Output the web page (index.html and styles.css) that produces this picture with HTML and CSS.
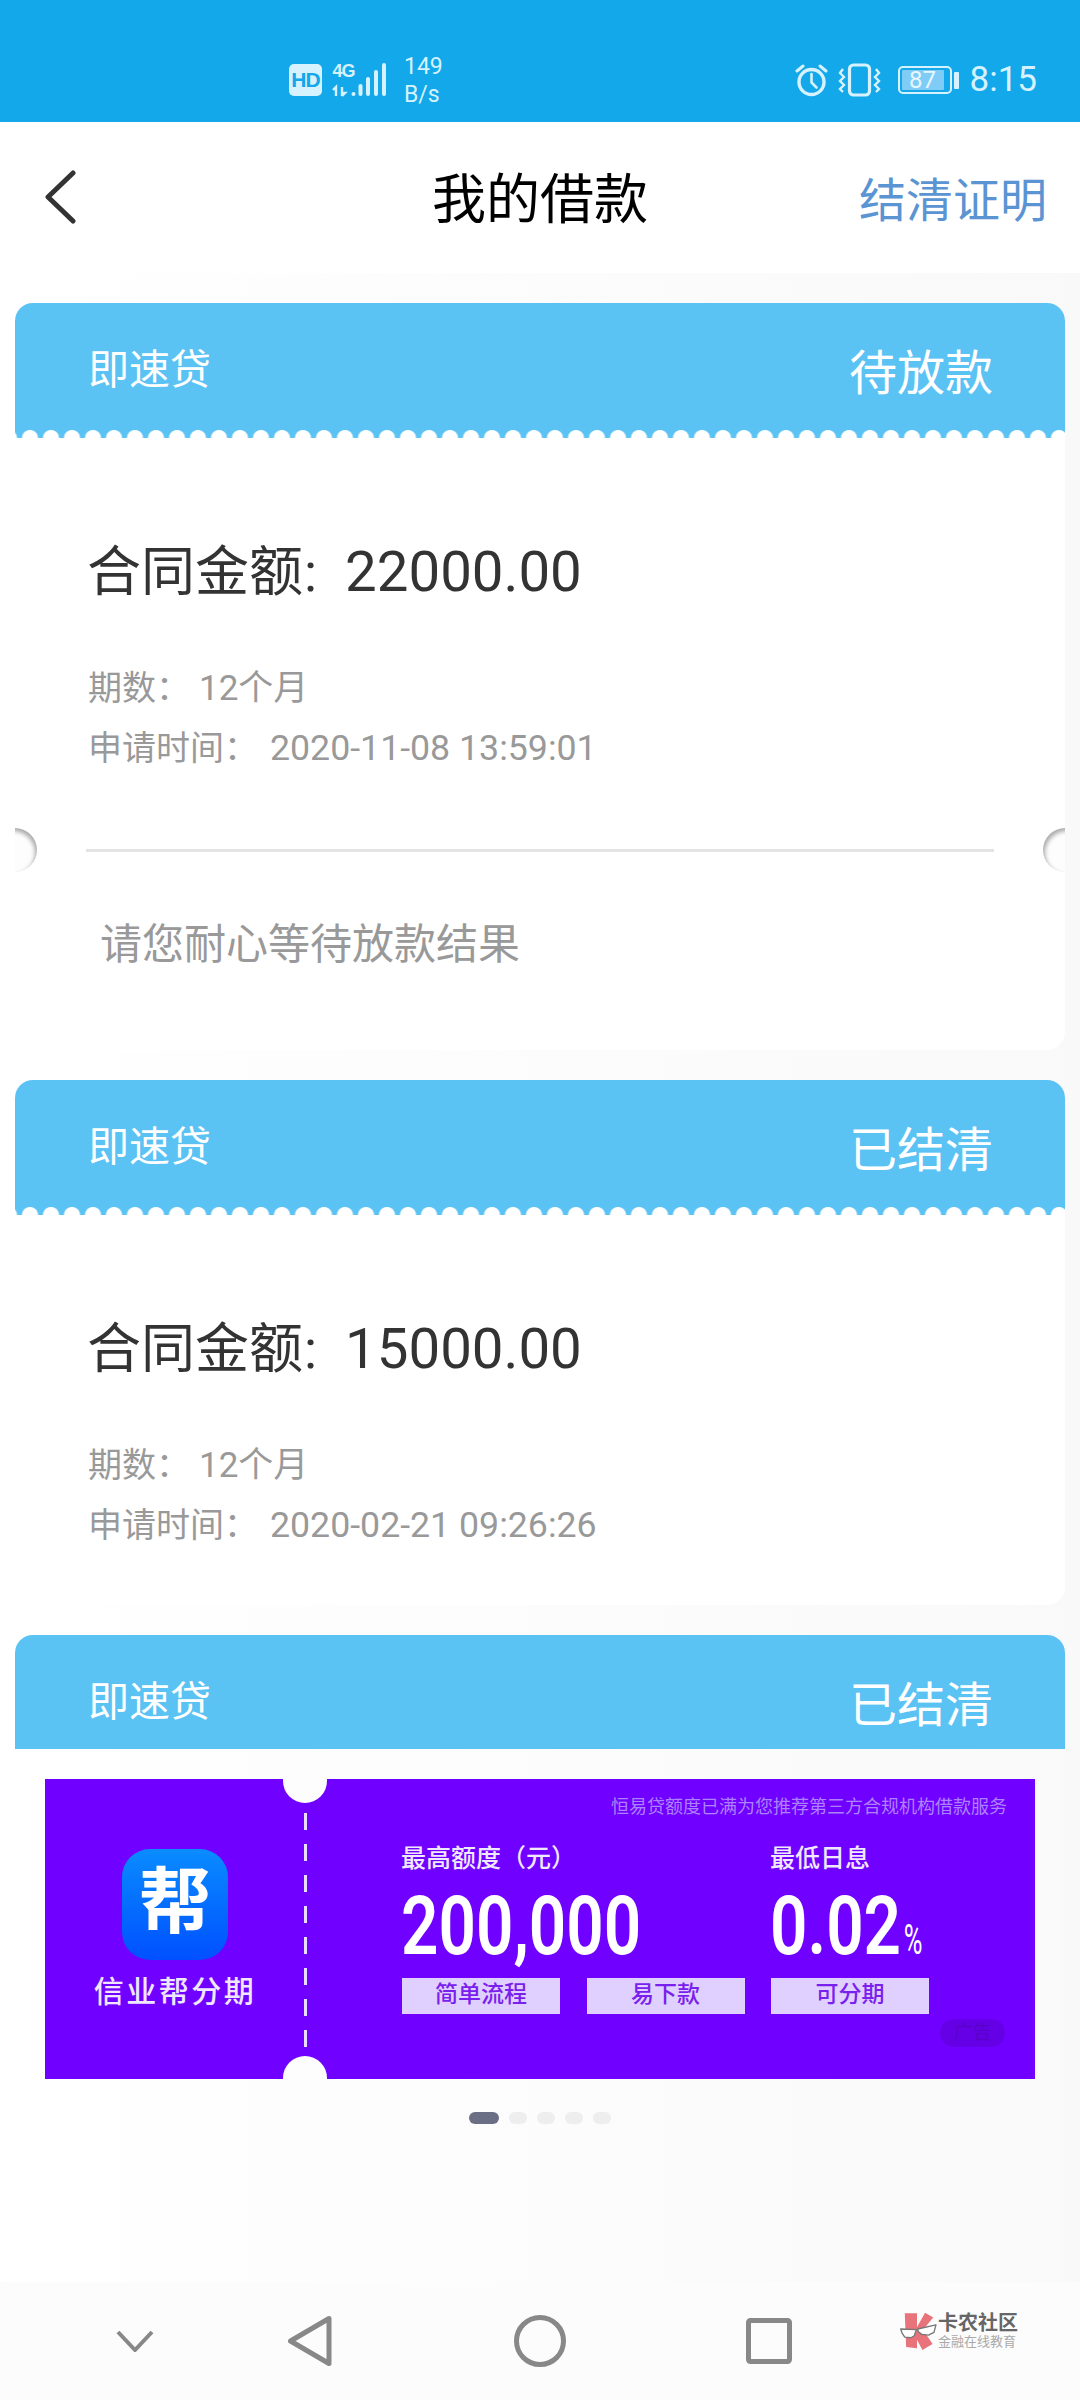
FILE: index.html
```html
<!DOCTYPE html>
<html lang="zh-CN">
<head>
<meta charset="utf-8">
<title>我的借款</title>
<link rel="stylesheet" href="styles.css">
</head>
<body>
<header class="status">
  <div class="status-left">
    <svg class="net" width="103" height="36" viewBox="0 0 103 36">
      <rect x="0" y="2" width="33" height="32" rx="5" fill="#d6f2ff"/>
      <text x="16.5" y="25" class="hd">HD</text>
      <text x="43.5" y="15" class="g4">4G</text>
      <path d="M47 25v9M44 28l3-3v9M53 34v-9M53 34l3-3-3 0" stroke="#d6f2ff" stroke-width="2.4" fill="none"/>
      <rect x="62.5" y="30" width="4" height="4" rx="2" fill="#d6f2ff"/>
      <rect x="69.5" y="22" width="4" height="12" rx="2" fill="#d6f2ff"/>
      <rect x="77" y="15" width="4" height="19" rx="2" fill="#d6f2ff"/>
      <rect x="85" y="8" width="4" height="26" rx="2" fill="#d6f2ff"/>
      <rect x="93" y="1" width="4" height="33" rx="2" fill="#d6f2ff"/>
    </svg>
    <div class="speed"><span>149</span><span>B/s</span></div>
  </div>
  <div class="status-right">
    <svg width="33" height="34" viewBox="0 0 33 34" fill="none" stroke="#d6f2ff" stroke-linecap="round">
      <circle cx="16.5" cy="19" r="12.5" stroke-width="3.4"/>
      <path d="M16.5 11v8.5l5 5" stroke-width="2.6"/>
      <path d="M2 8l6-5M31 8l-6-5" stroke-width="3"/>
    </svg>
    <svg class="vib" width="44" height="34" viewBox="0 0 44 34" fill="none" stroke="#d6f2ff">
      <rect x="11.5" y="2" width="20" height="30" rx="4" stroke-width="3.2"/>
      <path d="M5 6l-3 4 4 4-4 4 4 4-4 4 3 3M38 6l3 4-4 4 4 4-4 4 4 4-3 3" stroke-width="2.4"/>
    </svg>
    <div class="battery"><div class="battery-body"><span class="battery-fill">87</span></div><i class="battery-cap"></i></div>
    <span class="clock">8:15</span>
  </div>
</header>

<nav class="topbar">
  <svg class="back" width="32" height="56" viewBox="0 0 32 56" fill="none"><path d="M29 4L4 28l25 24" stroke="#333" stroke-width="5" stroke-linecap="round" stroke-linejoin="round"/></svg>
  <h1 class="title">我的借款</h1>
  <a class="settle">结清证明</a>
</nav>

<main class="main">
  <section class="list">
    <article class="card">
      <div class="card-head"><span class="product">即速贷</span><span class="state">待放款</span></div>
      <div class="card-body">
        <p class="amount"><span class="amount-label">合同金额</span><span class="amount-colon">:</span>22000.00</p>
        <p class="meta meta-first">期数：<span class="val-term">12个月</span></p>
        <p class="meta">申请时间：<span class="val-date">2020-11-08 13:59:01</span></p>
      </div>
      <div class="card-foot">
        <i class="notch notch-l"></i><i class="notch notch-r"></i>
        <hr class="rule">
        <p class="hint">请您耐心等待放款结果</p>
      </div>
    </article>
    <article class="card">
      <div class="card-head"><span class="product">即速贷</span><span class="state">已结清</span></div>
      <div class="card-body">
        <p class="amount"><span class="amount-label">合同金额</span><span class="amount-colon">:</span>15000.00</p>
        <p class="meta meta-first">期数：<span class="val-term">12个月</span></p>
        <p class="meta">申请时间：<span class="val-date">2020-02-21 09:26:26</span></p>
      </div>
    </article>
    <article class="card">
      <div class="card-head"><span class="product">即速贷</span><span class="state">已结清</span></div>
    </article>
  </section>

  <section class="ad-wrap">
    <div class="ad">
      <i class="ad-cut ad-cut-t"></i><i class="ad-cut ad-cut-b"></i><i class="ad-dash"></i>
      <div class="ad-left">
        <div class="ad-icon">帮</div>
        <div class="ad-brand">信业帮分期</div>
      </div>
      <div class="ad-right">
        <p class="ad-note">恒易贷额度已满为您推荐第三方合规机构借款服务</p>
        <div class="ad-cols">
          <div class="ad-col-a">
            <div class="ad-h">最高额度（元）</div>
            <div class="ad-num">200,000</div>
          </div>
          <div class="ad-col-b">
            <div class="ad-h">最低日息</div>
            <div class="ad-num">0.02<small class="ad-pct">%</small></div>
          </div>
        </div>
        <div class="ad-tags"><span>简单流程</span><span>易下款</span><span>可分期</span></div>
      </div>
      <span class="ad-mark">广告</span>
    </div>
    <div class="dots"><i class="dot dot-on"></i><i class="dot"></i><i class="dot"></i><i class="dot"></i><i class="dot"></i></div>
  </section>
</main>

<footer class="sysnav">
  <svg class="k-chev" width="38" height="22" viewBox="0 0 38 22" fill="none"><path d="M2 2l17 18L36 2" stroke="#888" stroke-width="4"/></svg>
  <svg class="k-tri" width="45" height="52" viewBox="0 0 45 52" fill="none"><path d="M42 3.5v45L3.5 26z" stroke="#888" stroke-width="5" stroke-linejoin="round"/></svg>
  <svg class="k-cir" width="52" height="52" viewBox="0 0 52 52" fill="none"><circle cx="26" cy="26" r="23.5" stroke="#888" stroke-width="5"/></svg>
  <svg class="k-sq" width="46" height="46" viewBox="0 0 46 46" fill="none"><rect x="2.5" y="2.5" width="41" height="41" rx="2" stroke="#888" stroke-width="5"/></svg>
  <div class="wm">
    <svg width="38" height="40" viewBox="60 65 110 118">
      <path d="M76 72h36v103l-32-4z" fill="#e8737b"/>
      <path d="M112 112l24-42 24 14-30 36 28 42-30 18-16-30z" fill="#e8737b"/>
      <path d="M64 118l46 2-6 18-10 6-18-2-8-12z" fill="#fff" stroke="#777" stroke-width="4" stroke-linejoin="round"/>
      <path d="M114 118l54-12-6 22-16 8-20-2-10-8z" fill="#fff" stroke="#777" stroke-width="4" stroke-linejoin="round"/>
    </svg>
    <div class="wm-text"><b>卡农社区</b><span>金融在线教育</span></div>
  </div>
</footer>
</body>
</html>
```

FILE: styles.css
```css
* { box-sizing: border-box; margin: 0; padding: 0; }
html, body { width: 1080px; height: 2400px; overflow: hidden; }
body {
  display: flex; flex-direction: column;
  font-family: Roboto, "Noto Sans CJK SC", sans-serif;
  background: #fff; color: #333;
}
.status {
  height: 122px; background: #12a8ea; flex: none;
  display: flex; justify-content: space-between; align-items: center;
  padding: 38px 43px 0 289px; color: #d6f2ff;
}
.status-left { display: flex; align-items: center; gap: 12px; }
.net { display: block; }
.hd { font: 700 21px "Liberation Sans", sans-serif; fill: #12a8ea; text-anchor: middle; letter-spacing: -1px; }
.g4 { font: 700 18px "Liberation Sans", sans-serif; fill: #d6f2ff; letter-spacing: -1px; }
.speed { display: flex; flex-direction: column; font-size: 23px; line-height: 28px; padding-top: 2px; }
.status-right { display: flex; align-items: center; }
.vib { margin-left: 10px; }
.battery { display: flex; align-items: center; margin-left: 16px; }
.battery-body {
  width: 54px; height: 28px; border: 2px solid #d6f2ff; border-radius: 5px; padding: 2px;
  display: flex;
}
.battery-fill {
  width: 42px; background: #7fcdf7; color: #e6f7ff; border-radius: 1px;
  font-size: 24px; line-height: 20px; text-align: center;
}
.battery-cap { width: 5px; height: 17px; background: #d6f2ff; margin-left: 2px; border-radius: 1px; }
.clock { font-size: 35px; margin-left: 11px; line-height: 40px; }

.topbar {
  height: 151px; flex: none; background: #fff;
  display: grid; grid-template-columns: 1fr auto 1fr; align-items: center;
  padding: 7px 33px 0;
}
.back { display: block; margin: -9px 0 0 11px; }
.title { font-size: 54px; font-weight: 400; color: #000; line-height: 70px; }
.settle { justify-self: end; font-size: 47px; color: #5b94d2; line-height: 60px; }

.main { flex: 1; display: flex; flex-direction: column; background: linear-gradient(90deg, #fff, #f9f9f9); }
.list { height: 1476px; flex: none; overflow: hidden; padding: 30px 15px 0; }
.card { background: #fff; border-radius: 18px; overflow: hidden; margin-bottom: 30px; }
.card-head {
  height: 135px; padding: 45px 72px 0 73px;
  display: flex; justify-content: space-between; align-items: flex-start;
  background-color: #5bc2f4;
  background-image: radial-gradient(circle at 50% 100%, #fff 7.5px, rgba(255,255,255,0) 8.5px);
  background-size: 21px 9px; background-position: 4.5px 100%; background-repeat: repeat-x;
  color: #fff;
}
.product { font-size: 41px; line-height: 44px; }
.state { font-size: 48px; line-height: 52px; }
.card-body { padding: 99px 73px 50px; }
.amount { font-size: 56.4px; line-height: 70px; color: #333; white-space: nowrap; margin-left: -1px; }
.amount-label { font-size: 54px; line-height: 1; }
.amount-colon { font-size: 54px; line-height: 1; margin: 0 28px 0 1px; }
.meta { font-size: 34px; line-height: 60px; color: #999; white-space: nowrap; }
.meta-first { margin-top: 51px; }
.val-term { font-size: 35px; line-height: 1; margin-left: 9px; }
.val-date { font-size: 35.7px; line-height: 1; margin-left: 12px; }
.card-foot { position: relative; padding: 21px 71px 75px; }
.rule { border: 0; height: 3px; background: #e4e4e4; }
.hint { margin-top: 63px; padding-left: 14px; font-size: 42px; line-height: 60px; color: #999; }
.notch { position: absolute; top: 0; width: 44px; height: 44px; border-radius: 50%; background: #fdfdfd; }
.notch-l { left: -22px; box-shadow: inset -2px 3px 4px rgba(0,0,0,.32); }
.notch-r { right: -22px; box-shadow: inset 2px 3px 4px rgba(0,0,0,.32); }

.ad-wrap { padding: 30px 45px 0; }
.ad {
  position: relative; height: 300px; background: #7000ff; overflow: hidden;
  display: flex;
}
.ad-cut { position: absolute; left: 238px; width: 44px; height: 44px; border-radius: 50%; background: #fdfdfd; }
.ad-cut-t { top: -20px; }
.ad-cut-b { bottom: -21px; }
.ad-dash {
  position: absolute; left: 259px; top: 34px; width: 3px; height: 236px;
  background: repeating-linear-gradient(180deg, #eadcff 0 17px, transparent 17px 31px);
}
.ad-left { width: 260px; flex: none; display: flex; flex-direction: column; align-items: center; padding-top: 70px; }
.ad-icon {
  width: 106px; height: 111px; border-radius: 28px;
  background: linear-gradient(180deg, #0a8cff, #0050ff);
  color: #fff; font-size: 72px; font-weight: 700; line-height: 108px; text-align: center;
}
.ad-brand { margin-top: 12px; font-size: 30px; line-height: 40px; letter-spacing: 2.5px; color: #f0e6ff; font-weight: 500; }
.ad-right { flex: 1; min-width: 0; padding: 16px 28px 0 96px; display: flex; flex-direction: column; }
.ad-note { text-align: right; font-size: 18px; line-height: 24px; color: #ad82ff; white-space: nowrap; }
.ad-cols { display: flex; margin-top: 25px; }
.ad-col-a { width: 369px; flex: none; }
.ad-col-b { flex: 1; }
.ad-h { font-size: 25px; line-height: 30px; color: #f0e8ff; font-weight: 500; white-space: nowrap; }
.ad-num {
  margin-top: 13px; font-size: 81px; line-height: 80px; font-weight: 600; color: #fff;
  transform: scaleX(.81); transform-origin: 0 50%; white-space: nowrap;
}
.ad-pct { display: inline-block; font-size: 42px; line-height: 1; font-weight: 400; margin-left: 3px; transform: scaleX(.75); transform-origin: 0 50%; }
.ad-tags { display: flex; gap: 26.5px; margin: 11px 0 0 1px; }
.ad-tags span {
  width: 158px; height: 36px; background: #e0d0ff; color: #7a20ee;
  font-size: 23px; line-height: 34px; text-align: center; font-weight: 500;
}
.ad-mark {
  position: absolute; right: 30px; top: 240px; width: 65px; height: 28px; border-radius: 14px;
  background: #6500e6; color: #5800c8; font-size: 19px; line-height: 28px; text-align: center;
}
.dots { display: flex; justify-content: center; gap: 10px; margin-top: 33px; }
.dot { width: 18px; height: 12px; border-radius: 6px; background: #eeeeee; }
.dot-on { width: 30px; background: #6b6f85; }

.sysnav {
  height: 118px; flex: none; background: #fcfcfc;
  display: flex; align-items: center; padding-left: 116px;
}
.k-tri { margin-left: 133px; }
.k-cir { margin-left: 182px; }
.k-sq { margin-left: 180px; }
.wm { display: flex; align-items: center; gap: 1px; margin-left: 107px; margin-bottom: 20px; }
.wm svg { display: block; }
.wm-text { display: flex; flex-direction: column; white-space: nowrap; }
.wm-text b { font-size: 20px; line-height: 22px; color: #666; font-weight: 700; }
.wm-text span { font-size: 13px; line-height: 16px; color: #aaa; letter-spacing: 0; }
```
